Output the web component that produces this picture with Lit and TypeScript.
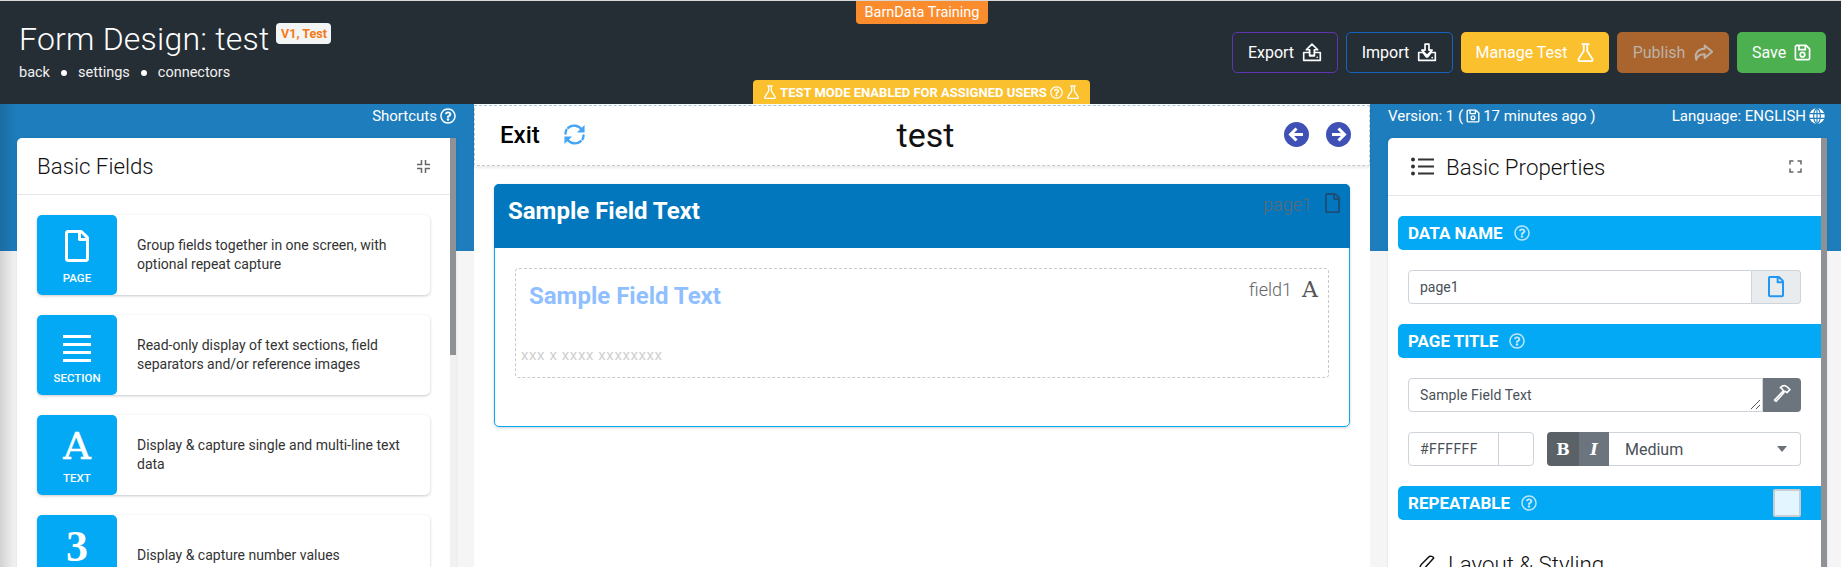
import { LitElement, html, css, svg } from "lit";
import { customElement } from "lit/decorators.js";

const FILE = "M369.9 97.9L286 14C277 5 264.8-.1 252.1-.1H48C21.5 0 0 21.5 0 48v416c0 26.5 21.5 48 48 48h288c26.5 0 48-21.5 48-48V131.9c0-12.7-5.1-25-14.1-34zM332.1 128H256V51.9l76.1 76.1zM48 464V48h160v104c0 13.3 10.7 24 24 24h104v288H48z";
const HELP = "M256 8C119.043 8 8 119.083 8 256c0 136.997 111.043 248 248 248s248-111.003 248-248C504 119.083 392.957 8 256 8zm0 448c-110.532 0-200-89.431-200-200 0-110.495 89.472-200 200-200 110.491 0 200 89.471 200 200 0 110.53-89.431 200-200 200zm107.244-255.2c0 67.052-72.421 68.084-72.421 92.863V300c0 6.627-5.373 12-12 12h-45.647c-6.627 0-12-5.373-12-12v-8.659c0-35.745 27.1-50.034 47.579-61.516 17.561-9.845 28.324-16.541 28.324-29.579 0-17.246-21.999-28.693-39.784-28.693-23.189 0-33.894 10.977-48.942 29.969-4.057 5.12-11.46 6.071-16.666 2.124l-27.824-21.098c-5.107-3.872-6.251-11.066-2.644-16.363C184.846 131.491 214.94 112 261.794 112c49.071 0 101.45 38.304 101.45 88.8zM298 368c0 23.159-18.841 42-42 42s-42-18.841-42-42 18.841-42 42-42 42 18.841 42 42z";

const fileIcon = (w: number, color: string) => html`<svg width=${w} height=${(w * 512) / 384} viewBox="0 0 384 512" fill=${color} style="display:block;flex:none"><path d=${FILE}></path></svg>`;
const help = (s: number) => html`<svg width=${s} height=${s} viewBox="0 0 512 512" fill="currentColor" style="display:block;flex:none"><path d=${HELP}></path></svg>`;
const line = (w: number, h: number, body: unknown, sw = 2, vb = "0 0 24 24") => html`<svg width=${w} height=${h} viewBox=${vb} fill="none" stroke="currentColor" stroke-width=${sw} stroke-linecap="round" stroke-linejoin="round" style="display:block;flex:none">${body}</svg>`;
const flask = (s: number) => line(s, s, svg`<path d="M8 1.500h8M9.800 2v8L3.300 20.300c-.8 1.300.1 2.700 1.500 2.700h14.400c1.400 0 2.300-1.400 1.500-2.700L14.200 10V2"/>`, 2.2);
const save = (s: number) => line(s, s, svg`<path d="M4 2h13l5 5v13a2 2 0 0 1-2 2H4a2 2 0 0 1-2-2V4a2 2 0 0 1 2-2z"/><path d="M7 2.500V8h9V2.500"/><circle cx="12" cy="15" r="3.200"/>`, 2.4);
const upload = line(20, 19, svg`<path d="M12 1.500 4.800 8.500H9v7.500h6V8.500h4.200z"/><path d="M9 12H1.500v10h21V12H15M18.500 18h.1"/><path d="M9 16h6"/>`, 2.1);
const download = line(20, 19, svg`<path d="M9.500 1.500h5v7.500h4L12 16 5.500 9h4z"/><path d="M7 12H1.500v10h21V12H17l-4 5.500h-2zM18.500 18.500h.1"/>`, 2.1);
const share = line(20, 20, svg`<path d="M14 3l9 7.500-9 7.500v-4.500c-5-.3-8.500 1-10 6.500C1.500 12 6 7.500 14 7z"/>`, 2.4);
const globe = line(16, 16, svg`<circle cx="12" cy="12" r="11.500" fill="currentColor" stroke="none"/><g stroke="#1e7dbd" stroke-width="1.700"><ellipse cx="12" cy="12" rx="5" ry="11"/><path d="M1.500 8.500h21M1.500 15.500h21M12 1v22"/></g>`);
const sync = line(23, 23, svg`<path d="M19.500 7A9.500 9.500 0 0 0 5.500 5M2.600 11a9.500 9.500 0 0 1 1-4M4.500 17A9.500 9.500 0 0 0 18.500 19M21.400 13a9.500 9.500 0 0 1-1 4"/><path d="M22.500 2v8h-8zM1.500 22v-8h8z" fill="currentColor" stroke="none"/>`, 2.5);
const arrow = (left: boolean) => html`<svg width="25" height="25" viewBox="0 0 25 25" style="display:block"><circle cx="12.500" cy="12.500" r="12.500" fill="#3f51b5"></circle><path d=${left ? "M12.500 6.500 6.500 12.500l6 6M7 12.500h12" : "M12.500 6.500l6 6-6 6M18 12.500H6"} fill="none" stroke="#fff" stroke-width="3"></path></svg>`;
const listIcon = html`<svg width="23" height="19" viewBox="0 0 23 19" fill="#333" style="display:block;flex:none"><circle cx="2" cy="2.500" r="2"></circle><circle cx="2" cy="9.500" r="2"></circle><circle cx="2" cy="16.500" r="2"></circle><rect x="7" y="1.500" width="16" height="2"></rect><rect x="7" y="8.500" width="16" height="2"></rect><rect x="7" y="15.500" width="16" height="2"></rect></svg>`;
const compress = html`<svg width="13" height="13" viewBox="0 0 13 13" fill="none" stroke="#666" stroke-width="1.500" style="display:block"><path d="M4.500 0v4.500H0M8.500 0v4.500H13M4.500 13V8.500H0M8.500 13V8.500H13"></path></svg>`;
const expand = html`<svg width="13" height="13" viewBox="0 0 13 13" fill="none" stroke="#666" stroke-width="1.500" style="display:block"><path d="M4.500 1H1v3.500M8.500 1H12v3.500M4.500 12H1V8.500M8.500 12H12V8.500"></path></svg>`;
const hammer = line(20, 20, svg`<path d="M3 20.500 13 10l1.500 1.500L5 22z"/><path d="M10 5.500c3-3 6-3 8-1l3.500 3.500-3.500 3.500-2-1.500-2-.5-2-2.500z"/>`, 1.9);
const pencil = line(18, 18, svg`<path d="M2 22c0-5 1-8 3-10L15 2c2-1 5 0 6 2L11 15c-2 2-5 6-9 7z"/>`, 2);

const FIELDS = [
  { label: "PAGE", icon: "page", text: "Group fields together in one screen, with optional repeat capture" },
  { label: "SECTION", icon: "lines", text: "Read-only display of text sections, field separators and/or reference images" },
  { label: "TEXT", icon: "A", text: "Display & capture single and multi-line text data" },
  { label: "NUMBER", icon: "3", text: "Display & capture number values" },
];

@customElement("app-root")
export class AppRoot extends LitElement {
  static styles = css`
    :host { display: block; height: 567px; overflow: hidden; position: relative; font-family: Roboto, "Liberation Sans", sans-serif; color: #212529; background: #f5f5f5; }
    * { box-sizing: border-box; }
    .pagehead { background: #252e35; position: relative; height: 104px; border-top: 1px solid #d8d8d8; display: flex; justify-content: space-between; color: #fff; }
    .ident { padding: 18px 0 0 19px; }
    .title { display: flex; align-items: flex-start; font-size: 32px; font-weight: 300; line-height: 40px; letter-spacing: .22px; }
    .badge { margin: 4px 0 0 7px; background: #fff; color: #fd7e14; font-size: 12.500px; font-weight: 700; height: 21px; width: 55px; border-radius: 4px; display: flex; align-items: center; justify-content: center; letter-spacing: 0; opacity: .95; }
    .links { display: flex; align-items: center; font-size: 14.500px; line-height: 20px; margin-top: 4px; color: #f1f1f1; }
    .links i { width: 6px; height: 6px; background: #fff; border-radius: 50%; margin: 0 11px; }
    .actions { display: flex; gap: 8px; padding: 31px 15px 0 0; }
    .btn { height: 41px; border-radius: 5px; display: flex; align-items: center; justify-content: center; gap: 8px; font-size: 16px; color: #fff; border: 1px solid transparent; }
    .export { width: 106px; border-color: #5e35b1; }
    .import { width: 107px; border-color: #1565c0; }
    .manage { width: 148px; background: #fbc02d; }
    .publish { width: 112px; background: #a9652d; color: #bdb2a6; }
    .save { width: 89px; background: #4caf50; }
    .tab { position: absolute; background: #fbc02d; color: #fff; display: flex; align-items: center; justify-content: center; white-space: nowrap; }
    .training { top: 0; left: 856px; width: 132px; height: 23px; background: #fb8c2e; border-radius: 0 0 4px 4px; font-size: 14.500px; }
    .testmode { top: 79px; left: 753px; width: 337px; height: 24px; border-radius: 4px 4px 0 0; font-size: 13px; font-weight: 700; gap: 3px; }

    .work { height: 463px; display: grid; grid-template-columns: 439px 896px 439px; column-gap: 18px; padding-left: 17px; background:
      linear-gradient(90deg, rgba(0,0,0,.14), rgba(0,0,0,0) 17px) left top / 17px 100% no-repeat,
      linear-gradient(#1e7dbd 147px, #f5f5f5 147px); }
    .side { display: flex; flex-direction: column; min-width: 0; }
    .strip { height: 34px; display: flex; align-items: center; color: #fff; font-size: 15px; gap: 3px; padding-bottom: 10px; }
    .strip.end { justify-content: flex-end; }
    .strip.between { justify-content: space-between; padding-right: 2px; }
    .strip span.fill { display: flex; align-items: center; gap: 3px; }
    .strip .ver { gap: 5px; }
    .panel { flex: 1; background: #fff; border-radius: 5px 0 0 0; display: flex; min-height: 0; box-shadow: 0 0 3px rgba(0,0,0,.1); }
    .pbody { flex: 1; min-width: 0; overflow: hidden; }
    .bar { width: 6px; flex: none; background: linear-gradient(#8e9196 217px, #f1f1f1 217px); }
    .bar.full { background: #8e9196; }
    .phead { height: 57px; border-bottom: 1px solid #e5e7e9; display: flex; align-items: center; justify-content: space-between; padding: 0 20px 0 20px; }
    .phead.props { height: 58px; padding: 0 19px 0 23px; }
    .phead .lbl { display: flex; align-items: center; gap: 12px; color: #111; font-weight: 300; font-size: 22.300px; }
    .cards { padding: 20px 20px 0 20px; display: flex; flex-direction: column; gap: 20px; }
    .card { height: 80px; flex: none; display: flex; align-items: center; border-radius: 5px; background: #fff; box-shadow: 0 1px 3px rgba(0,0,0,.22); }
    .tile { width: 80px; height: 80px; flex: none; background: #03a9f4; border-radius: 5px; color: #fff; display: flex; flex-direction: column; align-items: center; font-weight: 500; }
    .glyph { height: 47px; display: flex; align-items: flex-end; justify-content: center; }
    .glyph.A { font-family: "DejaVu Serif", serif; font-size: 38px; line-height: 31px; -webkit-text-stroke: .6px #fff; }
    .glyph.num { font-family: "Liberation Serif", serif; font-weight: 700; font-size: 44px; line-height: 31px; }
    .lines { display: flex; flex-direction: column; gap: 5px; width: 28px; }
    .lines b { height: 3px; background: #fff; display: block; }
    .tile small { font-size: 11.500px; margin-top: 10px; line-height: 13px; }
    .card p { margin: 0; padding: 0 20px; font-size: 14px; line-height: 19px; color: #333; }

    .center { background: #fff; display: flex; flex-direction: column; }
    .ctool { margin-top: 1px; height: 61px; border: 1px dashed #c7c7c7; border-top-color: #9ccbe8; border-radius: 0 0 2px 2px; display: grid; grid-template-columns: 1fr auto 1fr; align-items: center; padding: 0 18px 2px 25px; box-shadow: 0 2px 3px rgba(0,0,0,.08); }
    .exit { display: flex; align-items: center; gap: 23px; font-size: 24px; font-weight: 500; color: #000; }
    .exit svg { color: #42a5f5; }
    .ctitle { font-size: 34px; color: #111; font-weight: 400; line-height: 40px; }
    .nav { display: flex; justify-content: flex-end; gap: 17px; }
    .pagecard { margin: 18px 20px 0 20px; height: 243px; border: 1px solid #03a9f4; border-radius: 5px; box-shadow: 0 1px 3px rgba(0,0,0,.18); }
    .pagetop { height: 64px; margin: -1px -1px 0; background: #0277bd; border-radius: 5px 5px 0 0; display: flex; justify-content: space-between; padding: 12px 10px 0 14px; color: #fff; }
    .pagetop h2 { margin: 0; font-size: 24px; line-height: 30px; font-weight: 700; }
    .meta { display: flex; gap: 13px; font-size: 18px; line-height: 24px; color: #5f6b74; font-weight: 300; align-items: flex-start; margin-top: -3px; }
    .field { margin: 20px 20px 0 20px; height: 110px; border: 1px dashed #c9c9c9; border-radius: 4px; display: flex; flex-direction: column; }
    .fieldrow { display: flex; justify-content: space-between; padding: 12px 10px 0 13px; }
    .fieldrow h3 { margin: 0; font-size: 24px; line-height: 30px; font-weight: 700; color: #90bfff; }
    .fmeta { display: flex; gap: 10px; color: #666; font-size: 18px; line-height: 24px; font-weight: 300; margin-top: -3px; }
    .fmeta b { font-family: "DejaVu Serif", serif; font-size: 22px; font-weight: 400; color: #555; line-height: 24px; }
    .ghost { margin: auto 0 13px 5px; font-size: 15px; color: #cfcfcf; letter-spacing: .6px; line-height: 18px; }

    .secbar { margin: 20px 0 0 10px; height: 34px; background: #03a9f4; border-radius: 5px 0 0 5px; display: flex; align-items: center; gap: 11px; padding: 0 0 0 10px; color: #fff; font-size: 17px; font-weight: 700; }
    .secbar svg { color: #bde6fb; }
    .secbar .check { margin-left: auto; width: 28px; height: 28px; background: #e3f5fe; border: 2px solid #c8cdd2; border-radius: 2px; margin-right: 20px; }
    .group { margin: 20px 20px 0 20px; height: 34px; display: flex; }
    .in { flex: 1; min-width: 0; border: 1px solid #ced4da; border-radius: 4px 0 0 4px; display: flex; align-items: center; padding-left: 11px; font-size: 14px; color: #495057; }
    .addon { width: 49px; background: #e9ecef; border: 1px solid #ced4da; border-left: 0; border-radius: 0 4px 4px 0; display: flex; align-items: center; justify-content: center; }
    .ta { position: relative; letter-spacing: .1px; }
    .grip { position: absolute; right: 1px; bottom: 1px; }
    .tool { width: 38px; background: #6c757d; color: #fff; border-radius: 0 4px 4px 0; display: flex; align-items: center; justify-content: center; padding-bottom: 4px; }
    .row { margin: 20px 20px 0 20px; height: 34px; display: flex; }
    .color { width: 126px; flex: none; border: 1px solid #ced4da; border-radius: 4px; display: flex; align-items: center; font-size: 14px; color: #495057; padding-left: 11px; position: relative; letter-spacing: .4px; }
    .color i { width: 1px; height: 100%; background: #ced4da; position: absolute; right: 34px; }
    .b { margin-left: 13px; width: 32px; flex: none; background: #5a6268; color: #fff; border-radius: 4px 0 0 4px; display: flex; align-items: center; justify-content: center; font: 700 16px "DejaVu Serif", serif; }
    .i { width: 30px; flex: none; background: #6c757d; color: #fff; display: flex; align-items: center; justify-content: center; font: italic 700 16px "DejaVu Serif", serif; }
    .sel { flex: 1; border: 1px solid #ced4da; border-left: 0; border-radius: 0 4px 4px 0; display: flex; align-items: center; justify-content: space-between; padding: 0 13px 0 16px; font-size: 16px; color: #495057; }
    .caret { width: 0; height: 0; border-left: 5px solid transparent; border-right: 5px solid transparent; border-top: 6px solid #6b7178; }
    .next { margin: 32px 20px 0 30px; display: flex; align-items: center; gap: 12px; font-size: 22.300px; font-weight: 300; color: #111; height: 24px; }
  `;

  private tile(f: (typeof FIELDS)[number]) {
    let g: unknown;
    if (f.icon === "page") g = html`<div class="glyph">${fileIcon(24, "#fff")}</div>`;
    else if (f.icon === "lines") g = html`<div class="glyph"><div class="lines"><b></b><b></b><b></b><b></b></div></div>`;
    else if (f.icon === "A") g = html`<div class="glyph A">A</div>`;
    else g = html`<div class="glyph num">${f.icon}</div>`;
    return html`<div class="tile">${g}<small>${f.label}</small></div>`;
  }

  render() {
    return html`
      <div class="pagehead">
        <div class="ident">
          <div class="title"><span>Form Design: test</span><span class="badge">V1, Test</span></div>
          <div class="links"><span>back</span><i></i><span>settings</span><i></i><span>connectors</span></div>
        </div>
        <div class="actions">
          <div class="btn export">Export ${upload}</div>
          <div class="btn import">Import ${download}</div>
          <div class="btn manage">Manage Test ${flask(19)}</div>
          <div class="btn publish">Publish ${share}</div>
          <div class="btn save">Save ${save(17)}</div>
        </div>
        <div class="tab training">BarnData Training</div>
        <div class="tab testmode">${flask(14)}<span>TEST MODE ENABLED FOR ASSIGNED USERS</span>${help(13)}${flask(14)}</div>
      </div>
      <div class="work">
        <section class="side">
          <div class="strip end">Shortcuts ${help(16)}</div>
          <div class="panel">
            <div class="pbody">
              <div class="phead"><span class="lbl">Basic Fields</span>${compress}</div>
              <div class="cards">
                ${FIELDS.map((f) => html`<div class="card">${this.tile(f)}<p>${f.text}</p></div>`)}
              </div>
            </div>
            <div class="bar"></div>
          </div>
        </section>
        <section class="center">
          <div class="ctool">
            <div class="exit"><span>Exit</span>${sync}</div>
            <div class="ctitle">test</div>
            <div class="nav">${arrow(true)}${arrow(false)}</div>
          </div>
          <div class="pagecard">
            <div class="pagetop"><h2>Sample Field Text</h2><div class="meta"><span>page1</span>${fileIcon(15, "#1c4f78")}</div></div>
            <div class="field">
              <div class="fieldrow"><h3>Sample Field Text</h3><div class="fmeta"><span>field1</span><b>A</b></div></div>
              <div class="ghost">xxx x xxxx xxxxxxxx</div>
            </div>
          </div>
        </section>
        <section class="side">
          <div class="strip between"><span class="fill ver">Version: 1 ( ${save(14)} 17 minutes ago )</span><span class="fill">Language: ENGLISH ${globe}</span></div>
          <div class="panel">
            <div class="pbody">
              <div class="phead props"><span class="lbl">${listIcon}Basic Properties</span>${expand}</div>
              <div class="secbar">DATA NAME ${help(16)}</div>
              <div class="group"><div class="in">page1</div><div class="addon">${fileIcon(16, "#2196f3")}</div></div>
              <div class="secbar">PAGE TITLE ${help(16)}</div>
              <div class="group">
                <div class="in ta">Sample Field Text
                  <svg class="grip" width="11" height="11" viewBox="0 0 11 11" stroke="#555" fill="none"><path d="M1 10 10 1M6 10l4-4"></path></svg>
                </div>
                <div class="tool">${hammer}</div>
              </div>
              <div class="row">
                <div class="color">#FFFFFF<i></i></div>
                <div class="b">B</div><div class="i">I</div>
                <div class="sel"><span>Medium</span><span class="caret"></span></div>
              </div>
              <div class="secbar">REPEATABLE ${help(16)}<span class="check"></span></div>
              <div class="next">${pencil}Layout &amp; Styling</div>
            </div>
            <div class="bar full"></div>
          </div>
        </section>
      </div>
    `;
  }
}
